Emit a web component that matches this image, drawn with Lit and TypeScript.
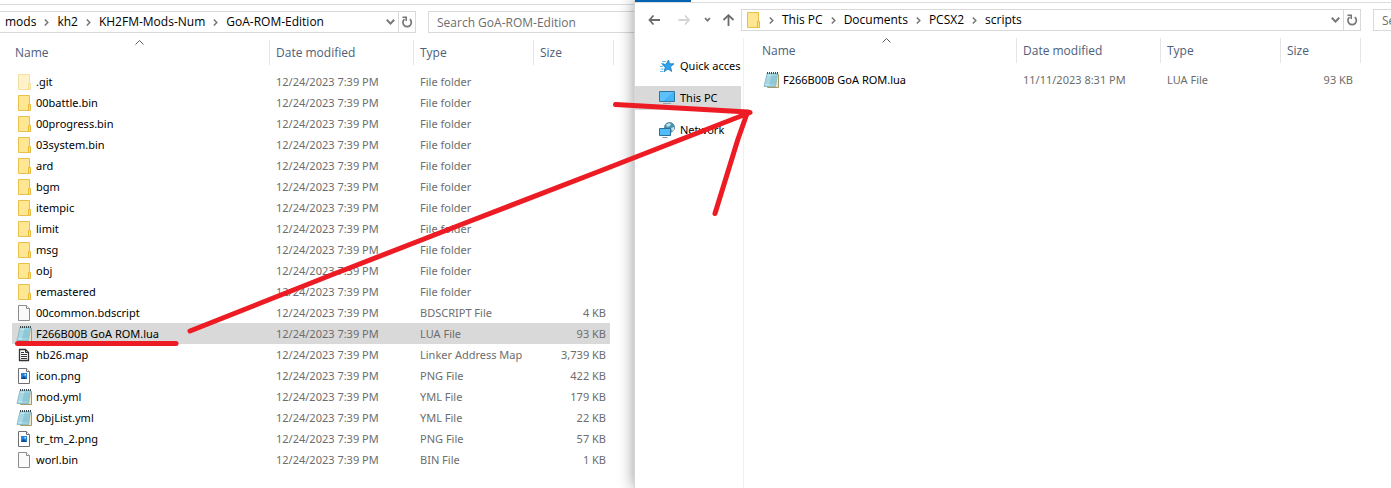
import { LitElement, html, css, svg, nothing } from "lit";
import { customElement, property } from "lit/decorators.js";
import { classMap } from "lit/directives/class-map.js";

type Kind = "folder" | "hidden" | "blank" | "notepad" | "map" | "image";

interface Entry {
  name: string;
  date: string;
  type: string;
  size?: string;
  kind: Kind;
  selected?: boolean;
}

const DATE = "12/24/2023 7:39 PM";
const folder = (name: string, kind: Kind = "folder"): Entry => ({ name, date: DATE, type: "File folder", kind });
const file = (name: string, type: string, size: string, kind: Kind, selected = false): Entry => ({
  name, date: DATE, type, size, kind, selected,
});

const MOD_FILES: Entry[] = [
  folder(".git", "hidden"),
  folder("00battle.bin"),
  folder("00progress.bin"),
  folder("03system.bin"),
  folder("ard"),
  folder("bgm"),
  folder("itempic"),
  folder("limit"),
  folder("msg"),
  folder("obj"),
  folder("remastered"),
  file("00common.bdscript", "BDSCRIPT File", "4 KB", "blank"),
  file("F266B00B GoA ROM.lua", "LUA File", "93 KB", "notepad", true),
  file("hb26.map", "Linker Address Map", "3,739 KB", "map"),
  file("icon.png", "PNG File", "422 KB", "image"),
  file("mod.yml", "YML File", "179 KB", "notepad"),
  file("ObjList.yml", "YML File", "22 KB", "notepad"),
  file("tr_tm_2.png", "PNG File", "57 KB", "image"),
  file("worl.bin", "BIN File", "1 KB", "blank"),
];

const SCRIPT_FILES: Entry[] = [
  { name: "F266B00B GoA ROM.lua", date: "11/11/2023 8:31 PM", type: "LUA File", size: "93 KB", kind: "notepad" },
];

const folderShape = svg`
  <path d="M2.500 .5h11v15h-11z" fill="#ffe693" stroke="#e8c04c"/>
  <path d="M12.500 15.500v-6h2v6z" fill="#ffe17d" stroke="#e6bb3c"/>`;

const page = svg`
  <path d="M2.500 .5h8l3 3v12h-11z" fill="#fafafa" stroke="#8c8c8c"/>
  <path d="M10.500 .5v3h3" fill="#fff" stroke="#8c8c8c"/>`;

const glyphs = {
  folder: folderShape,
  hidden: svg`<g opacity=".5">${folderShape}</g>`,
  blank: page,
  notepad: svg`
    <path d="M4.500 2.500h11v13h-11z" fill="#efe6c8" stroke="#a89868"/>
    <path d="M4 1.500h10.500L12.500 14.500H1z" fill="#9bd2df" stroke="#7fb4c2" stroke-width=".8"/>
    <path d="M4.500 2.500h4L6 13.500H2z" fill="#c9edf3" opacity=".75"/>
    <path d="M4 5h9.500M3.500 7h9.600M3 9h9.800M2.500 11h10" stroke="#72b4c6" stroke-width=".6"/>
    <path d="M4 1h11" stroke="#3b4a50" stroke-width="2" stroke-dasharray="1 1"/>`,
  map: svg`
    <path d="M3.500 2.500h6l3 3v8h-9z" fill="#fff" stroke="#333" stroke-width="1.300"/>
    <path d="M9.500 2.500v3h3" fill="none" stroke="#333"/>
    <path d="M5 5.500h3M5 7.500h6M5 9.500h6M5 11.500h6" stroke="#333"/>`,
  image: svg`
    <path d="M2.500 .5h8l3 3v12h-11z" fill="#fff" stroke="#6e6e6e"/>
    <path d="M10.500 .5v3h3" fill="#fff" stroke="#6e6e6e"/>
    <path d="M5 5h6v6H5z" fill="#2482d8"/>
    <path d="M5 11l2.500-3 3.500 3z" fill="#0b4b96"/>
    <path d="M8.500 6h1.500v1.500H8.500z" fill="#d4ecff"/>`,
};

const icon = (kind: Kind) => html`<svg class="icon" viewBox="0 0 16 16" aria-hidden="true">${glyphs[kind]}</svg>`;

@customElement("file-table")
export class FileTable extends LitElement {
  @property({ attribute: false }) entries: Entry[] = [];

  static styles = css`
    :host { display: block; }
    table { border-collapse: separate; border-spacing: 0; table-layout: fixed; width: 602px; }
    .name { width: 258px; }
    .date { width: 144px; }
    .type { width: 120px; }
    .size { width: 80px; }
    th {
      position: relative; height: 25px; box-sizing: border-box; padding: 0;
      border-right: 1px solid #e5e5e5; text-align: left; font-weight: 400;
    }
    .sort {
      display: block; font: inherit; line-height: 24px; color: #4c607a; background: none;
      border: 0; padding: 0 6px; width: 100%; text-align: left;
    }
    .name .sort { padding-left: 3px; }
    .caret { position: absolute; top: 0; left: 50%; width: 9px; height: 5px; margin-left: -6px; }
    tbody { font-family: "Noto Sans", sans-serif; font-size: 11px; }
    tbody::before { content: ""; display: block; height: 6px; }
    td { height: 21px; padding: 0 6px; color: #6d6d6d; white-space: nowrap; line-height: 21px; }
    td.name { color: #000; padding-left: 4px; }
    td.size { text-align: right; padding-right: 4px; border-right: 4px solid transparent; background-clip: padding-box; }
    .selected td { background-color: #d9d9d9; }
    .label { display: flex; align-items: center; gap: 4px; }
    .icon { width: 16px; height: 16px; flex: none; }
  `;

  render() {
    const heads = [["name", "Name"], ["date", "Date modified"], ["type", "Type"], ["size", "Size"]];
    return html`
      <table>
        <thead>
          <tr>
            ${heads.map(([key, text]) => html`
              <th class=${key} scope="col">
                <button class="sort" type="button">${text}</button>
                ${key === "name"
                  ? html`<svg class="caret" viewBox="0 0 9 5" aria-hidden="true"><path d="M.5 4.500l4-4 4 4" fill="none" stroke="#5a5a5a"/></svg>`
                  : nothing}
              </th>`)}
          </tr>
        </thead>
        <tbody>
          ${this.entries.map((e) => html`
            <tr class=${classMap({ selected: !!e.selected })}>
              <td class="name"><span class="label">${icon(e.kind)}<span>${e.name}</span></span></td>
              <td class="date">${e.date}</td>
              <td class="type">${e.type}</td>
              <td class="size">${e.size ?? ""}</td>
            </tr>`)}
        </tbody>
      </table>`;
  }
}

@customElement("address-bar")
export class AddressBar extends LitElement {
  @property({ attribute: false }) crumbs: string[] = [];
  @property({ type: Boolean }) root = false;

  static styles = css`
    :host { display: flex; box-sizing: border-box; height: 22px; border: 1px solid #d9d9d9; background: #fff; }
    .path { flex: 1; display: flex; align-items: center; gap: 8px; padding-left: 5px; min-width: 0; }
    .path.rooted { padding-left: 3px; }
    .crumb { color: #000; text-decoration: none; line-height: 20px; white-space: nowrap; }
    .icon { width: 16px; height: 16px; flex: none; }
    .sep { width: 5px; height: 7px; flex: none; }
    .tool { display: flex; align-items: center; justify-content: center; width: 16px; padding: 0; border: 0; background: none; }
    .tool.refresh { border-left: 1px solid #d9d9d9; width: 17px; }
    .drop { width: 9px; height: 6px; }
    .turn { width: 12px; height: 12px; }
  `;

  render() {
    const sep = html`<svg class="sep" viewBox="0 0 5 7" aria-hidden="true"><path d="M.8 .5l3 3-3 3" fill="none" stroke="#777" stroke-width="1.500"/></svg>`;
    return html`
      <nav class=${classMap({ path: true, rooted: this.root })} aria-label="Folder path">
        ${this.root ? icon("folder") : nothing}
        ${this.crumbs.map((c, i) => html`${i > 0 || this.root ? sep : nothing}<a class="crumb" href="#">${c}</a>`)}
      </nav>
      <button class="tool" type="button" aria-label="Previous locations">
        <svg class="drop" viewBox="0 0 9 6"><path d="M.8 .8l3.700 3.800L8.200 .8" fill="none" stroke="#777" stroke-width="2"/></svg>
      </button>
      <button class="tool refresh" type="button" aria-label="Refresh">
        <svg class="turn" viewBox="0 0 12 12">
          <path d="M3.500 3.200A4.200 4.200 0 1 0 8.800 3.200" fill="none" stroke="#777" stroke-width="1.700"/>
          <path d="M1.500 1.200h3.700v3.800" fill="none" stroke="#777" stroke-width="1.600"/>
        </svg>
      </button>`;
  }
}

@customElement("app-root")
export class AppRoot extends LitElement {
  static styles = css`
    :host {
      display: block; position: relative; overflow: hidden; min-height: 100vh; background: #fff;
      font: 12px/16px "Open Sans", "Noto Sans", sans-serif;
    }
    .desktop { display: grid; grid-template-columns: 634fr 757fr; min-height: 100vh; }
    .window { min-width: 0; overflow: hidden; background: #fff; }
    .front { box-shadow: 0 0 15px rgba(0, 0, 0, .42); border-left: 1px solid #d6d6d6; position: relative; }
    .ribbon { display: flex; height: 4px; border-bottom: 1px solid #dcdcdc; }
    .front .ribbon { height: 2px; }
    .tab { width: 56px; height: 2px; background: #0063b1; }
    .bar { display: flex; padding-top: 6px; }
    .back address-bar { flex: 0 0 417px; margin-left: -1px; }
    .front address-bar { flex: 1; }
    .search {
      box-sizing: border-box; height: 22px; margin: 0 0 0 12px; padding: 0 8px; border: 1px solid #d9d9d9;
      border-right: 0; border-radius: 0; background: #fff; font: inherit; color: #000; min-width: 0;
    }
    .back .search { flex: 1; }
    .front .search { flex: 0 0 200px; margin-right: -182px; }
    .search::placeholder { color: #6d6d6d; opacity: 1; }
    .back file-table { margin: 7px 0 0 12px; }
    .travel { display: flex; align-items: center; width: 106px; box-sizing: border-box; padding-left: 13px; }
    .go { padding: 0; border: 0; background: none; display: flex; }
    .go svg { height: 12px; width: 13px; }
    .go.next { margin-left: 17px; }
    .go.recent { margin-left: 13px; }
    .go.recent svg { width: 7px; }
    .go.up { margin-left: 11px; }
    .body { display: flex; margin-top: 7px; min-height: calc(100vh - 38px); }
    .side {
      width: 106px; padding-top: 16px; display: flex; flex-direction: column; gap: 8px; flex: none; overflow: hidden;
    }
    .place {
      display: flex; align-items: center; gap: 5px; height: 24px; padding-left: 24px; color: #000;
      text-decoration: none; white-space: nowrap; font-family: "Noto Sans", sans-serif; font-size: 11px;
    }
    .place.current { background: #d9d9d9; }
    .place svg { width: 16px; height: 16px; flex: none; }
    .files { border-left: 1px solid #f0f0f0; margin-left: 2px; padding-left: 15px; flex: 1; min-width: 0; }
    .marks { position: absolute; top: 0; left: 0; width: 1px; height: 1px; overflow: visible; pointer-events: none; }
  `;

  private arrow(d: string, color: string, w = 13) {
    return html`<svg viewBox="0 0 ${w} 12"><path d=${d} fill="none" stroke=${color} stroke-width="1.800"/></svg>`;
  }

  render() {
    return html`
      <main class="desktop">
        <section class="window back" aria-label="GoA-ROM-Edition">
          <div class="ribbon"></div>
          <div class="bar">
            <address-bar .crumbs=${["mods", "kh2", "KH2FM-Mods-Num", "GoA-ROM-Edition"]}></address-bar>
            <input class="search" type="text" aria-label="Search GoA-ROM-Edition" placeholder="Search GoA-ROM-Edition" />
          </div>
          <file-table .entries=${MOD_FILES}></file-table>
        </section>

        <section class="window front" aria-label="scripts">
          <div class="ribbon"><div class="tab"></div></div>
          <div class="bar">
            <div class="travel">
              <button class="go" type="button" aria-label="Back">${this.arrow("M5.500 1.500L1.500 6 5.500 10.500M1.500 6H12", "#6b6b6b")}</button>
              <button class="go next" type="button" aria-label="Forward">${this.arrow("M7 1.500L11 6 7 10.500M11 6H.5", "#d4d4d4")}</button>
              <button class="go recent" type="button" aria-label="Recent locations">${this.arrow("M1 4l2.500 2.700L6 4", "#777", 7)}</button>
              <button class="go up" type="button" aria-label="Up">${this.arrow("M1.500 6L6.500 1.200 11.500 6M6.500 1.200V12", "#6b6b6b")}</button>
            </div>
            <address-bar root .crumbs=${["This PC", "Documents", "PCSX2", "scripts"]}></address-bar>
            <input class="search" type="text" aria-label="Search scripts" placeholder="Search scripts" />
          </div>
          <div class="body">
            <nav class="side" aria-label="Places">
              <a class="place" href="#">
                <svg viewBox="0 0 16 16" aria-hidden="true">
                  <path d="M9.500 2l1 3.800h4.500l-3.500 3 1.200 4.700-3.700-2.600-4 2.900 1.300-4.600-3-2.700 3.800-.3z" fill="#2da5ee" stroke="#1878bd" stroke-width=".8"/>
                  <path d="M3 3.500h4M2 5.500h3M1 8.500h3M1.500 11h3M1 13.500h3" stroke="#69bdf0"/>
                </svg>Quick access</a>
              <a class="place current" href="#">
                <svg viewBox="0 0 16 16" aria-hidden="true">
                  <path d="M.5 1.500h15v10H.5z" fill="#42b4f7" stroke="#30779f"/>
                  <path d="M1 2h14L4 11H1z" fill="#72caff" opacity=".6"/>
                  <path d="M4 13.500h8" stroke="#8ba5b3"/>
                </svg>This PC</a>
              <a class="place" href="#">
                <svg viewBox="0 0 16 16" aria-hidden="true">
                  <circle cx="10.500" cy="5.500" r="5" fill="#4b91ad" stroke="#376f8b" stroke-width=".7"/>
                  <path d="M7 2.500l3-1.500 2 1-1 2-3 1zM12 6l3-1v3l-2 1.500z" fill="#bfe0e6"/>
                  <path d="M.5 6.500h11v7H.5z" fill="#51bcfa" stroke="#2c6f98"/>
                  <path d="M3.500 15.500h5" stroke="#7e98a6"/>
                </svg>Network</a>
            </nav>
            <div class="files"><file-table .entries=${SCRIPT_FILES}></file-table></div>
          </div>
        </section>
      </main>
      <svg class="marks" aria-hidden="true">
        <g fill="none" stroke="#ed1c24" stroke-width="5" stroke-linecap="round" stroke-linejoin="round">
          <path d="M17.500 343.500H176"/>
          <path d="M190 331L330 275.500 460 225 600 171 750 112.500"/>
          <path d="M615.500 104.500L748 112"/>
          <path d="M747 113.500L738 139 715 213.500"/>
        </g>
      </svg>`;
  }
}
